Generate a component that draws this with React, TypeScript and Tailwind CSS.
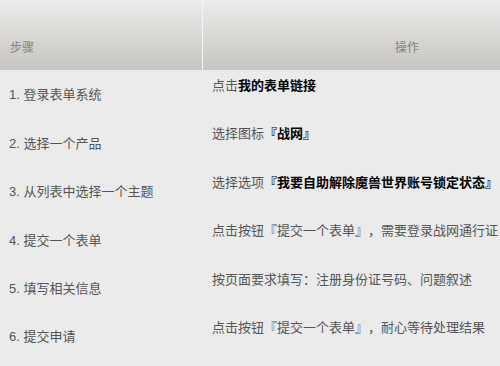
const rows: { step: string; action: React.ReactNode }[] = [
  {
    step: "1. 登录表单系统",
    action: (
      <>
        点击<b className="font-bold text-black">我的表单链接</b>
      </>
    ),
  },
  {
    step: "2. 选择一个产品",
    action: (
      <>
        选择图标<b className="font-bold text-black">『战网』</b>
      </>
    ),
  },
  {
    step: "3. 从列表中选择一个主题",
    action: (
      <>
        选择选项<b className="font-bold text-black">『我要自助解除魔兽世界账号锁定状态』</b>
      </>
    ),
  },
  { step: "4. 提交一个表单", action: "点击按钮『提交一个表单』，需要登录战网通行证" },
  { step: "5. 填写相关信息", action: "按页面要求填写：注册身份证号码、问题叙述" },
  { step: "6. 提交申请", action: "点击按钮『提交一个表单』，耐心等待处理结果" },
];

export default function App() {
  return (
    <div
      className="w-[500px] h-[366px] overflow-hidden bg-[#ebebeb] text-[13px] text-[#555] [text-spacing-trim:space-all]"
      style={{ fontFamily: '"Liberation Sans", "Noto Sans CJK SC", sans-serif' }}
    >
      <div className="w-[611px]">
        <div className="flex h-[70px] bg-gradient-to-b from-[#ececeb] to-[#c7c5c1] text-[12px] text-[#858585]">
          <div className="w-[203px] pl-[10px] pt-[39px] border-r border-[#f4f4f4]">步骤</div>
          <div className="flex-1 text-center pt-[39px]">操作</div>
        </div>
        {rows.map((r) => (
          <div key={r.step} className="flex h-[48.4px]">
            <div className="w-[203px] pl-[9px] flex items-center pt-[2px]">{r.step}</div>
            <div className="flex-1 pl-[9px] pt-[6px] whitespace-nowrap">{r.action}</div>
          </div>
        ))}
      </div>
    </div>
  );
}
